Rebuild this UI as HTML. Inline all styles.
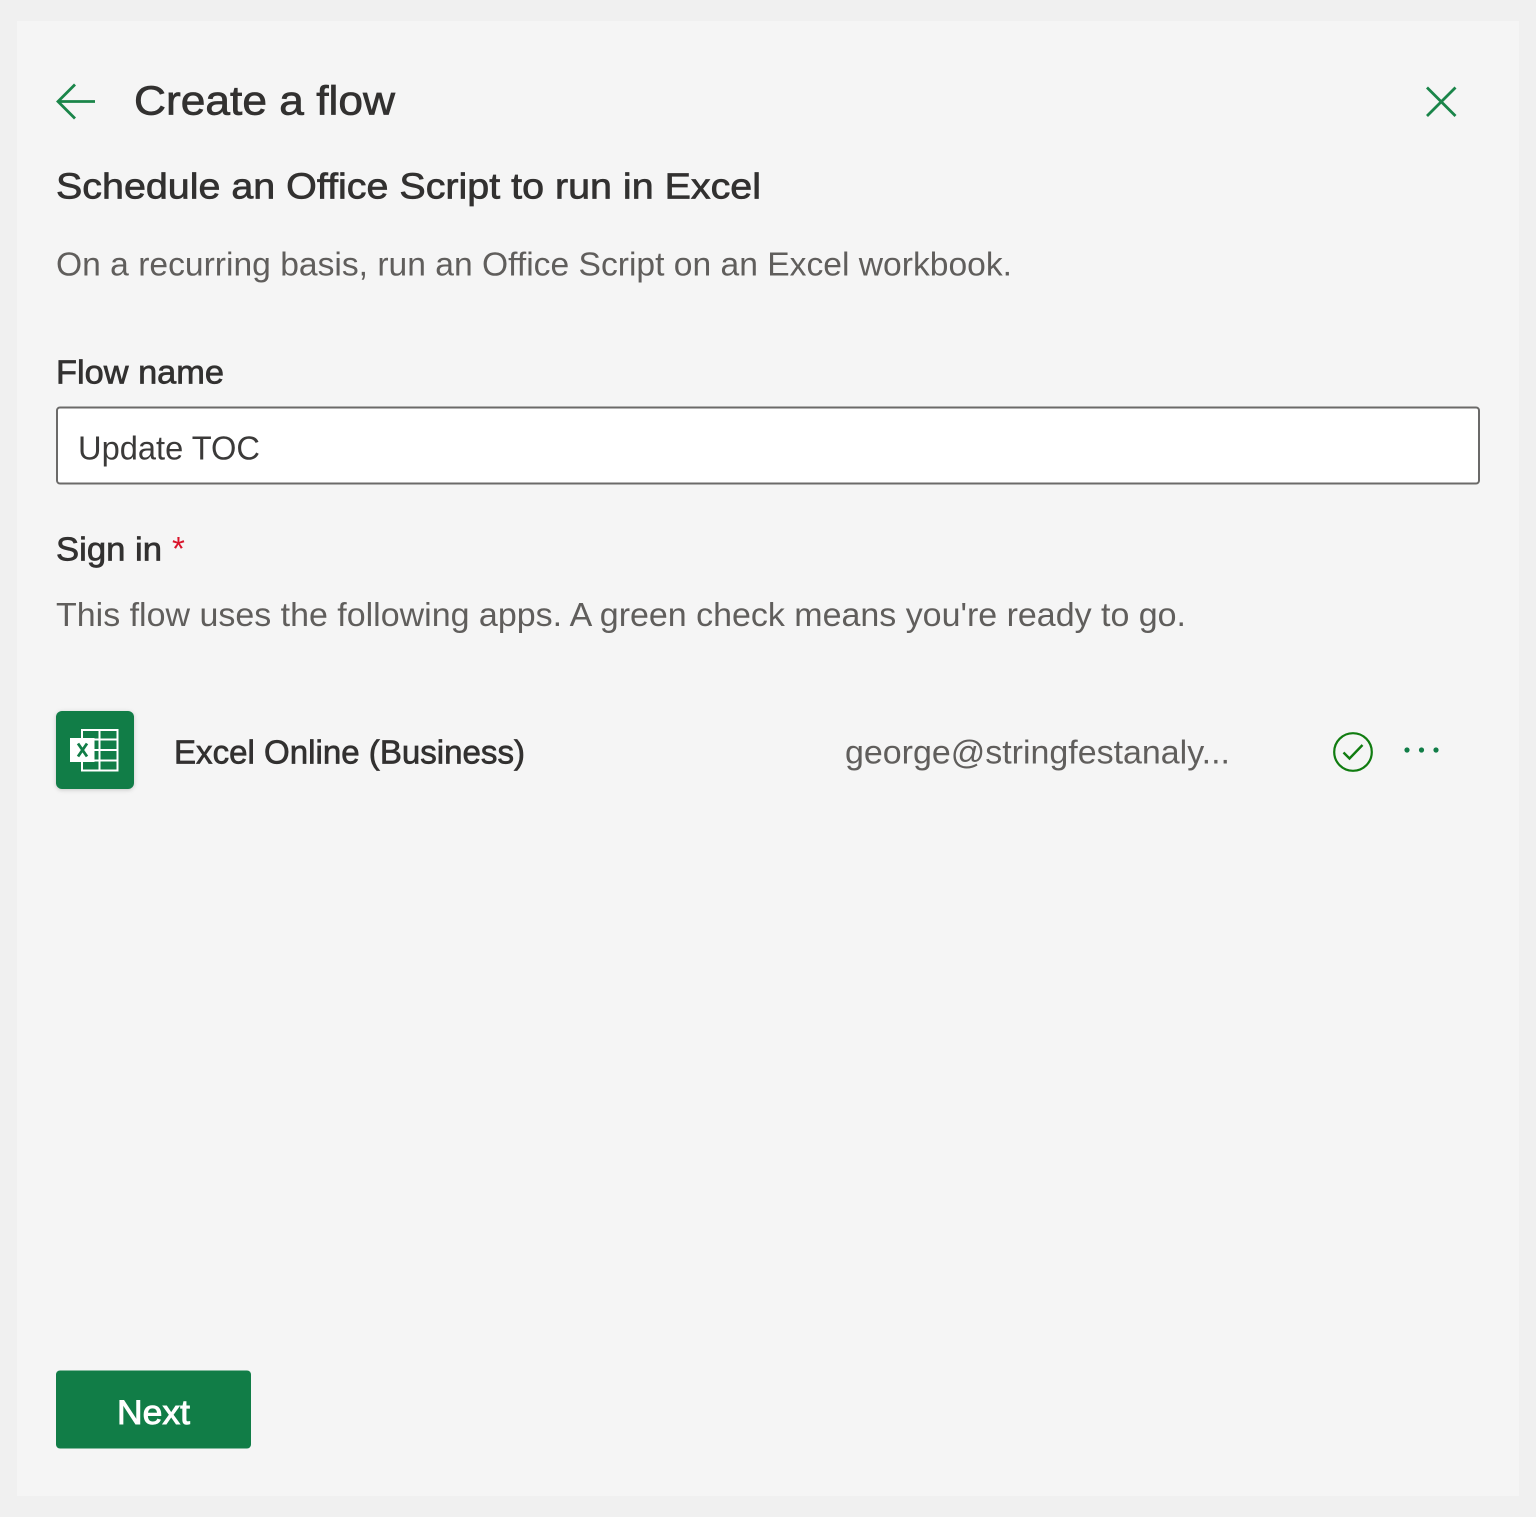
<!DOCTYPE html>
<html lang="en">
<head>
<meta charset="utf-8">
<title>Create a flow</title>
<style>
html,body{margin:0;padding:0;background:#f0f0f0}
body{width:1536px;height:1517px;overflow:hidden;position:relative}
svg{display:block;position:absolute;left:0;top:0}
text{font-family:"Liberation Sans",Arial,sans-serif}
.semi{fill:#323130;stroke:#323130;stroke-width:.7px}
.reg{fill:#605e5c}
</style>
</head>
<body>
<svg width="1536" height="1517" viewBox="0 0 1536 1517" xmlns="http://www.w3.org/2000/svg">
<rect x="0" y="0" width="1536" height="1517" fill="#f0f0f0"/>
<rect x="17" y="21" width="1502" height="1475" fill="#f5f5f5"/>

<path d="M95 101.500H58M75 84.500L58 101.500L75 118.500" fill="none" stroke="#1a8549" stroke-width="2.800"/>
<text class="semi" x="134" y="114.500" font-size="41" textLength="261" lengthAdjust="spacingAndGlyphs">Create a flow</text>
<path d="M1427 87.500L1455.500 116M1455.500 87.500L1427 116" fill="none" stroke="#1a8549" stroke-width="2.800"/>

<text class="semi" x="56" y="198.500" font-size="36" textLength="705" lengthAdjust="spacingAndGlyphs">Schedule an Office Script to run in Excel</text>
<text class="reg" x="56" y="275.500" font-size="33" textLength="956" lengthAdjust="spacingAndGlyphs">On a recurring basis, run an Office Script on an Excel workbook.</text>

<text class="semi" x="56" y="383.500" font-size="33" textLength="168" lengthAdjust="spacingAndGlyphs">Flow name</text>
<rect x="57" y="407.500" width="1422" height="76" rx="3" fill="#ffffff" stroke="#6b6a69" stroke-width="2"/>
<text x="78" y="459.500" font-size="33" fill="#3b3a39" textLength="182" lengthAdjust="spacingAndGlyphs">Update TOC</text>

<text class="semi" x="56" y="560.500" font-size="33" textLength="106" lengthAdjust="spacingAndGlyphs">Sign in</text>
<text x="172" y="560" font-size="33" fill="#d9142b">*</text>
<text class="reg" x="56" y="626" font-size="33" textLength="1130" lengthAdjust="spacingAndGlyphs">This flow uses the following apps. A green check means you're ready to go.</text>

<rect x="56" y="711" width="78" height="78" rx="6" fill="#117d47" style="filter:drop-shadow(0 1px 2px rgba(0,0,0,.18))"/>
<g fill="none" stroke="#ffffff" stroke-width="2">
  <rect x="82" y="730" width="35.500" height="40.500"/>
  <path d="M99.500 730V770.500M82 739.500H117.500M82 750H117.500M82 760.500H117.500"/>
</g>
<rect x="70" y="738" width="24.500" height="24" fill="#ffffff"/>
<path d="M78 743.500L87 756.500M87 743.500L78 756.500" fill="none" stroke="#117d47" stroke-width="2.800"/>

<text class="semi" x="174" y="763.500" font-size="33" textLength="351" lengthAdjust="spacingAndGlyphs">Excel Online (Business)</text>
<text class="reg" x="845" y="763.500" font-size="33" textLength="385" lengthAdjust="spacingAndGlyphs">george@stringfestanaly...</text>

<circle cx="1353" cy="752" r="18.800" fill="none" stroke="#107c10" stroke-width="2.200"/>
<path d="M1343.500 752.500L1349.500 758.500L1362.500 745" fill="none" stroke="#107c10" stroke-width="2.400"/>
<circle cx="1407" cy="750" r="2.600" fill="#117d47"/>
<circle cx="1421.500" cy="750" r="2.600" fill="#117d47"/>
<circle cx="1436" cy="750" r="2.600" fill="#117d47"/>

<rect x="56" y="1370.500" width="195" height="78" rx="4" fill="#117d47"/>
<text x="117" y="1424" font-size="34" fill="#ffffff" stroke="#ffffff" stroke-width=".9" textLength="73" lengthAdjust="spacingAndGlyphs">Next</text>
</svg>
</body>
</html>
